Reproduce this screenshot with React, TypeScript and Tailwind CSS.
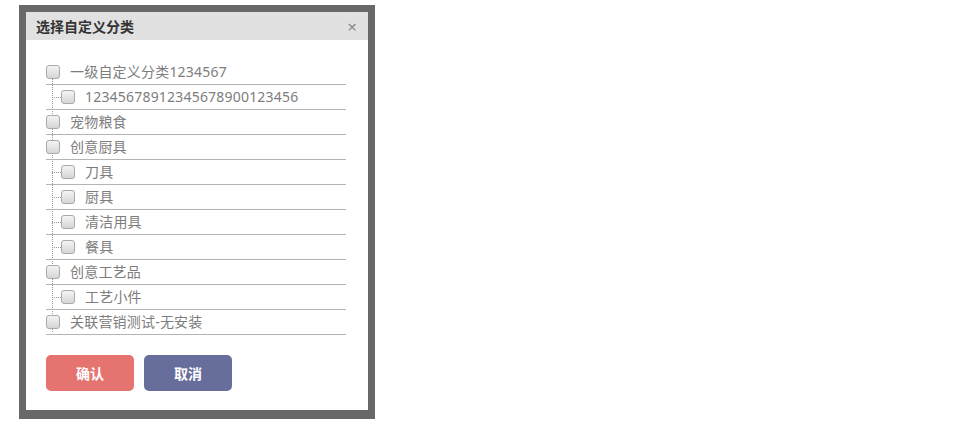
import React from "react";

type Item = { label: string; level: 0 | 1 };

const items: Item[] = [
  { label: "一级自定义分类1234567", level: 0 },
  { label: "12345678912345678900123456", level: 1 },
  { label: "宠物粮食", level: 0 },
  { label: "创意厨具", level: 0 },
  { label: "刀具", level: 1 },
  { label: "厨具", level: 1 },
  { label: "清洁用具", level: 1 },
  { label: "餐具", level: 1 },
  { label: "创意工艺品", level: 0 },
  { label: "工艺小件", level: 1 },
  { label: "关联营销测试-无安装", level: 0 },
];

const Box = () => (
  <span className="relative z-10 block h-[14px] w-[14px] shrink-0 rounded-[3px] border border-[#a9a9a9] bg-gradient-to-b from-[#f4f4f4] to-[#d6d6d6]" />
);

function Row({ item }: { item: Item }) {
  return (
    <div className="relative flex h-[25px] items-center border-b border-[#b4b4b4]">
      {item.level === 1 && (
        <span className="absolute left-[6px] top-[12px] w-[9px] border-t border-dotted border-[#999]" />
      )}
      <div className={item.level === 1 ? "flex items-center pl-[15px]" : "flex items-center"}>
        <Box />
        <span className="ml-[10px] text-[14px] leading-none tracking-[0.2px] text-[#7d7d7d]">{item.label}</span>
      </div>
    </div>
  );
}

export default function App() {
  return (
    <div
      className="h-[424px] w-[961px] bg-white pl-[19px] pt-[5px]"
      style={{ fontFamily: '"Noto Sans", "Noto Sans CJK SC", sans-serif' }}
    >
      <div className="w-[356px] bg-[#686868] p-[7px] pb-[9px]">
        <div className="bg-white">
          <div className="flex h-[28px] items-center justify-between bg-[#e1e1e1] pl-[10px] pr-[11px]">
            <span className="text-[14px] font-bold text-[#333]">选择自定义分类</span>
            <span className="text-[17px] leading-none text-[#8a8a8a]">×</span>
          </div>
          <div className="px-[20px] pb-[19px] pt-[20px]">
            <div className="relative w-[300px]">
              <span className="absolute bottom-[3px] left-[6px] top-[19px] border-l border-dotted border-[#999]" />
              {items.map((item, i) => (
                <Row key={i} item={item} />
              ))}
            </div>
            <div className="mt-[20px] flex gap-[10px]">
              <button className="h-[36px] w-[88px] rounded-[5px] bg-[#e5736f] text-[14px] font-bold text-white">
                确认
              </button>
              <button className="h-[36px] w-[88px] rounded-[5px] bg-[#676e9c] text-[14px] font-bold text-white">
                取消
              </button>
            </div>
          </div>
        </div>
      </div>
    </div>
  );
}
